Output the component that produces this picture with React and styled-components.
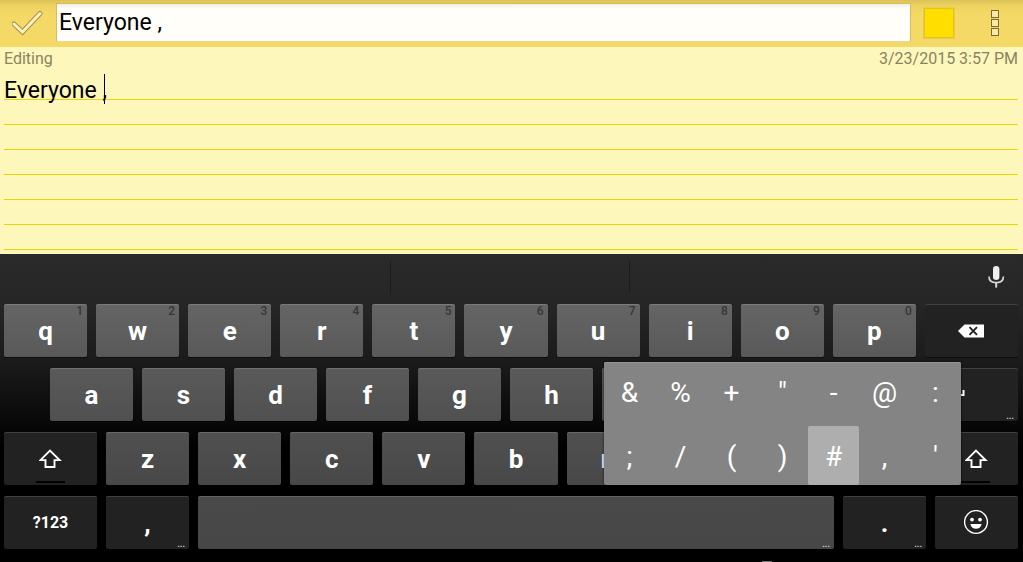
import React, { useState } from 'react'
import styled, { createGlobalStyle } from 'styled-components'

const topRow = ['q', 'w', 'e', 'r', 't', 'y', 'u', 'i', 'o', 'p']
const homeRow = ['a', 's', 'd', 'f', 'g', 'h', 'j', 'k', 'l']
const bottomRow = ['z', 'x', 'c', 'v', 'b', 'n', 'm', '!', '?']
const symbols = ['&', '%', '+', '"', '-', '@', ':', ';', '/', '(', ')', '#', ',', "'"]

// keys that sit under the open symbol popup lose their label
const covered = ['j', 'k', 'l', 'm', '!', '?']

const CheckIcon = () => (
  <svg width="32" height="26" viewBox="1 0 32 26" fill="none" strokeLinecap="round" strokeLinejoin="miter">
    <path d="M3 14 L11.5 22 L29 3.5" stroke="#a3904a" strokeWidth="5" />
    <path d="M3 14 L11.5 22 L29 3.5" stroke="#fff2bd" strokeWidth="3" />
  </svg>
)

const MicIcon = () => (
  <svg width="18" height="24" viewBox="0 0 18 24" fill="none">
    <rect x="6" y="1" width="6.4" height="14" rx="3.2" fill="#eee" />
    <path d="M2 11.5 C2 15.8 5 17.6 9.2 17.6 C13.4 17.6 16.4 15.8 16.4 11.5" stroke="#d8d8d8" strokeWidth="1.7" />
    <path d="M9.2 17.5 V22.6" stroke="#d8d8d8" strokeWidth="2" />
  </svg>
)

const BackspaceIcon = () => (
  <svg width="26" height="14" viewBox="0 0 26 14">
    <path d="M0 7 L6.5 0.4 H26 V13.6 H6.5 Z" fill="#fff" />
    <path d="M11.5 3.2 L19 10.8 M19 3.2 L11.5 10.8" stroke="#222" strokeWidth="1.9" />
  </svg>
)

const EnterIcon = () => (
  <svg width="34" height="18" viewBox="0 0 34 18" fill="none" stroke="#fff" strokeWidth="2">
    <path d="M32.5 4 V9 H3 M10 2 L3 9 L10 16" />
  </svg>
)

const ShiftIcon = () => (
  <svg width="23" height="20" viewBox="1 0 23 20" fill="none">
    <path d="M12 1.6 L21.6 11.1 H16.5 V18 H7.5 V11.1 H2.4 Z" stroke="#fff" strokeWidth="1.9" />
  </svg>
)

const SmileIcon = () => (
  <svg width="25" height="25" viewBox="1 1 25 25">
    <circle cx="13" cy="13" r="11.4" fill="none" stroke="#fff" strokeWidth="1.4" />
    <circle cx="9" cy="10.6" r="1.9" fill="#fff" />
    <circle cx="17" cy="10.6" r="1.9" fill="#fff" />
    <path d="M7.4 15 H18.6 C17.8 18.4 15.8 19.8 13 19.8 C10.2 19.8 8.2 18.4 7.4 15 Z" fill="#fff" />
  </svg>
)

const App = () => {
  const [title, setTitle] = useState('Everyone ,')
  const [body, setBody] = useState('Everyone ,')

  return (
    <Screen>
      <GlobalStyle />
      <Header>
        <IconButton aria-label="Done">
          <CheckIcon />
        </IconButton>
        <TitleInput aria-label="Title" value={title} onChange={e => setTitle(e.target.value)} />
        <ColorButton aria-label="Note color" />
        <IconButton aria-label="More options">
          <MenuDots>
            <i />
            <i />
            <i />
          </MenuDots>
        </IconButton>
      </Header>

      <Note>
        <Meta>
          <span>Editing</span>
          <time>3/23/2015 3:57 PM</time>
        </Meta>
        <Paper>
          <BodyInput
            aria-label="Note"
            spellCheck={false}
            value={body}
            onChange={e => setBody(e.target.value)}
          />
          <Caret />
        </Paper>
      </Note>

      <Keyboard>
        <Suggestions>
          <Suggestion aria-label="Suggestion 1" />
          <Suggestion aria-label="Suggestion 2" />
          <Suggestion aria-label="Suggestion 3" />
          <MicButton aria-label="Voice input">
            <MicIcon />
          </MicButton>
        </Suggestions>

        <Keys>
          <Row>
            {topRow.map((k, i) => (
              <Key key={k} $from="#656565" $to="#595959">
                {k}
                <Hint>{(i + 1) % 10}</Hint>
              </Key>
            ))}
            <DarkKey $size={93} aria-label="Backspace">
              <BackspaceIcon />
            </DarkKey>
          </Row>

          <Row $indent>
            {homeRow.map(k => (
              <Key key={k} $from="#5a5a5a" $to="#505050" aria-label={k}>
                {!covered.includes(k) && k}
              </Key>
            ))}
            <DarkKey $size={140} aria-label="Enter">
              <EnterIcon />
              <More>...</More>
            </DarkKey>
          </Row>

          <Row>
            <DarkKey $size={93} aria-label="Shift">
              <ShiftIcon />
              <ShiftBar />
            </DarkKey>
            {bottomRow.map(k => (
              <Key key={k} $from="#505050" $to="#484848" aria-label={k}>
                {!covered.includes(k) && k}
              </Key>
            ))}
            <DarkKey aria-label="Shift">
              <ShiftIcon />
              <ShiftBar />
            </DarkKey>
          </Row>

          <Row>
            <DarkKey $size={93} $small>
              ?123
            </DarkKey>
            <DarkKey>
              ,<More>...</More>
            </DarkKey>
            <Key $size={636} $from="#494949" $to="#474747" aria-label="Space">
              <More>...</More>
            </Key>
            <DarkKey>
              .<More>...</More>
            </DarkKey>
            <DarkKey aria-label="Emoji">
              <SmileIcon />
            </DarkKey>
          </Row>
        </Keys>

        <SymbolPopup>
          {symbols.map(s => (
            <SymbolKey key={s} $active={s === '#'}>
              {s}
            </SymbolKey>
          ))}
        </SymbolPopup>

        <SystemBar>
          <Handle />
        </SystemBar>
      </Keyboard>
    </Screen>
  )
}

export default App

const GlobalStyle = createGlobalStyle`
  * {
    box-sizing: border-box;
  }

  body {
    margin: 0;
    background: #000;
  }

  body, button, input, textarea {
    font-family: Roboto, 'Liberation Sans', sans-serif;
  }

  button {
    padding: 0;
    border: 0;
    background: none;
  }
`

const Screen = styled.div`
  min-height: 100vh;
  display: flex;
  flex-direction: column;
`

const Header = styled.header`
  height: 47px;
  padding-bottom: 2px;
  display: flex;
  align-items: center;
  background: linear-gradient(#dcc257, #efd361 6px, #f5d967 14px, #f5d966);
`

const IconButton = styled.button`
  width: 56px;
  height: 45px;
  display: flex;
  align-items: center;
  justify-content: center;
`

const TitleInput = styled.input`
  flex: 1;
  min-width: 0;
  height: 39px;
  padding: 0 2px;
  border: 1px solid #d5bd5c;
  border-bottom-color: #e6d9a0;
  border-radius: 0;
  outline: 0;
  background: linear-gradient(#f1efe6, #fffef9 5px);
  color: #000;
  font-size: 23px;
`

const ColorButton = styled.button`
  width: 30px;
  height: 30px;
  margin: 0 13px;
  border: 1px solid #e0c51f;
  background: #ffde00;
  box-shadow: 0 0 0 1px #e8cc50;
`

const MenuDots = styled.span`
  display: grid;
  gap: 1px;

  i {
    width: 8px;
    height: 8px;
    border: 1px solid #7b6b2e;
    background: #fae9ac;
  }
`

const Note = styled.main`
  flex: 1;
  display: flex;
  flex-direction: column;
  padding: 0 5px 0 4px;
  background: #fef7bb;
`

const Meta = styled.div`
  display: flex;
  justify-content: space-between;
  padding-bottom: 4px;
  color: #88845f;
  font-size: 16px;
  line-height: 24px;
`

const Paper = styled.div`
  flex: 1;
  display: flex;
  position: relative;
`

const BodyInput = styled.textarea`
  flex: 1;
  min-height: 175px;
  padding: 3px 0 0;
  border: 0;
  outline: 0;
  resize: none;
  overflow: hidden;
  color: #000;
  font-size: 23px;
  line-height: 25px;
  background: linear-gradient(transparent 24px, #ebd505 24px) 0 0 / 100% 25px;
`

const Caret = styled.span`
  position: absolute;
  left: 100px;
  top: -1px;
  width: 1px;
  height: 30px;
  background: #000;
`

const Keyboard = styled.section`
  position: relative;
  background: linear-gradient(#2a2a2a, #262626 50px, #1a1a1a 110px, #000 195px);
`

const Suggestions = styled.div`
  height: 50px;
  padding: 7px 0 11px;
  display: grid;
  grid-template-columns: 390fr 239fr 340fr 54px;
`

const Suggestion = styled.button`
  & + & {
    border-left: 1px solid #1b1b1b;
  }
`

const MicButton = styled.button`
  display: flex;
  align-items: center;
  justify-content: center;
`

const Keys = styled.div`
  display: grid;
  gap: 11px;
`

const Row = styled.div`
  display: flex;
  gap: 9px;
  padding: 0 5px 0 ${p => (p.$indent ? 50 : 4)}px;
`

const Key = styled.button`
  position: relative;
  flex: ${p => p.$size || 83} 1 0;
  min-width: 0;
  height: 53px;
  display: flex;
  align-items: center;
  justify-content: center;
  border-radius: 2px;
  background: linear-gradient(${p => p.$from}, ${p => p.$to});
  box-shadow: inset 0 1px rgba(255, 255, 255, 0.14), 0 1px rgba(0, 0, 0, 0.5);
  color: #fff;
  font-size: ${p => (p.$small ? 16 : 26)}px;
  font-weight: 700;
`

const DarkKey = styled(Key)`
  background: #222;
`

const Hint = styled.span`
  position: absolute;
  top: 0;
  right: 4px;
  color: #363636;
  font-size: 12px;
  font-weight: 500;
  line-height: 14px;
`

const More = styled.span`
  position: absolute;
  right: 4px;
  bottom: 1px;
  color: #ccc;
  font-size: 9px;
  line-height: 8px;
`

const ShiftBar = styled.span`
  position: absolute;
  left: calc(50% - 15px);
  bottom: 2px;
  width: 29px;
  height: 2px;
  background: #000;
`

const SymbolPopup = styled.div`
  position: absolute;
  right: 62px;
  bottom: 77px;
  display: grid;
  grid-template-columns: repeat(7, 51px);
  grid-auto-rows: 59px;
  row-gap: 5px;
  border-radius: 2px;
  background: #848484;
  box-shadow: inset 0 1px #969696, 0 0 3px rgba(0, 0, 0, 0.7);
`

const SymbolKey = styled.button`
  padding-top: 2px;
  border-radius: 2px;
  background: ${p => (p.$active ? '#aeaeae' : 'none')};
  color: #fff;
  font-size: 28px;
`

const SystemBar = styled.div`
  height: 13px;
  display: flex;
  align-items: flex-end;
`

const Handle = styled.span`
  width: 10px;
  height: 1px;
  margin-left: 74.5%;
  border-radius: 1px;
  background: #777;
`
